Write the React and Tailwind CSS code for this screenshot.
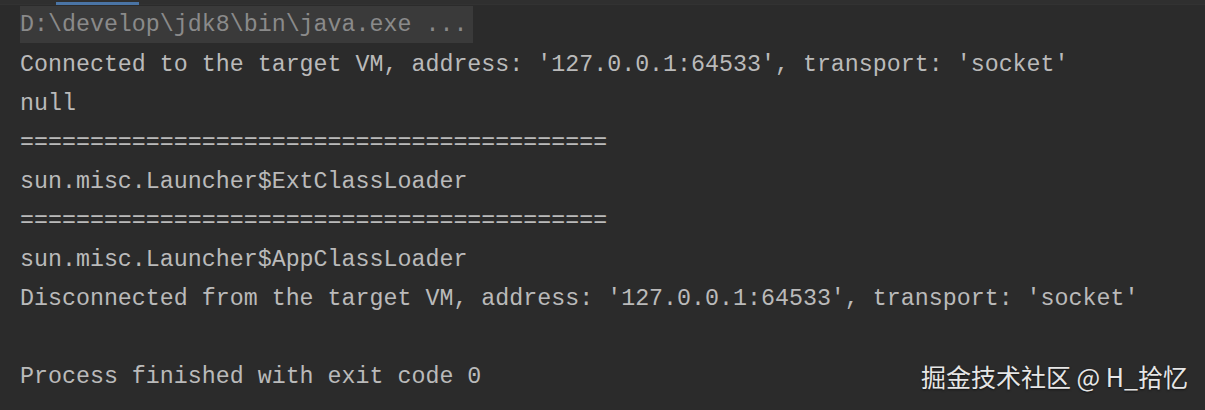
const lines = [
  "Connected to the target VM, address: '127.0.0.1:64533', transport: 'socket'",
  'null',
  '==========================================',
  'sun.misc.Launcher$ExtClassLoader',
  '==========================================',
  'sun.misc.Launcher$AppClassLoader',
  "Disconnected from the target VM, address: '127.0.0.1:64533', transport: 'socket'",
  '',
  'Process finished with exit code 0',
]

export default function App() {
  return (
    <div className="relative h-[410px] w-[1205px] overflow-hidden bg-[#2b2b2b]">
      <div className="flex h-[5px] border-b border-[#323232] bg-[#2f2f2f]">
        <div className="ml-[56px] mt-[2px] h-[3px] w-[83px] bg-[#4a74a5]" />
      </div>

      <div className="pl-[20px] font-['Liberation_Mono',monospace] text-[23.3px] leading-[39px] text-[#bababa]">
        <div className="flex pt-[1px]">
          <span className="h-[37px] whitespace-pre bg-[#3a3a3a] pr-[6px] pt-[1px] leading-[37px] text-[#8a8a8a]">
            D:\develop\jdk8\bin\java.exe ...
          </span>
        </div>
        {lines.map((line, index) => (
          <div key={index} className="h-[39px] whitespace-pre pt-[3px]">
            {line}
          </div>
        ))}
      </div>

      <div className="absolute bottom-[19px] right-[17px] font-['Noto_Sans_CJK_SC',sans-serif] text-[25px] leading-[30px] text-[#e6e6e6] [text-shadow:0_1px_2px_rgba(0,0,0,0.6)]">
        掘金技术社区 @ H_拾忆
      </div>
    </div>
  )
}
